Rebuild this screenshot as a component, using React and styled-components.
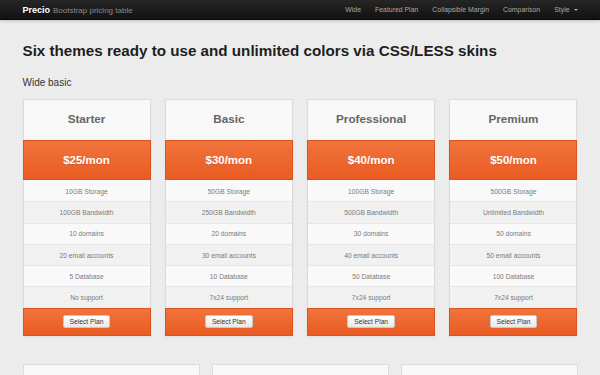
import React from "react";
import styled, { createGlobalStyle } from "styled-components";

const GlobalStyle = createGlobalStyle`
    body {
        margin: 0;
        background-color: #ececec;
        font-family: "Liberation Sans", Arial, sans-serif;
    }
`;

const Navbar = styled.div`
    height: 19px;
    background: linear-gradient(#262626, #121212);
    border-bottom: 1px solid #0a0a0a;
    box-shadow: 0 1px 3px rgba(0, 0, 0, 0.2);
`;

const NavInner = styled.div`
    width: 555px;
    height: 100%;
    margin: 0 auto;
    display: flex;
    align-items: center;
    justify-content: space-between;
`;

const Brand = styled.div`
    display: flex;
    align-items: baseline;
    gap: 3px;
`;

const BrandName = styled.span`
    color: #fff;
    font-weight: bold;
    font-size: 9px;
`;

const BrandTag = styled.span`
    color: #8a8a8a;
    font-size: 8px;
`;

const NavLinks = styled.div`
    display: flex;
    align-items: center;
    margin-right: -7px;
`;

const NavLink = styled.span`
    color: #a8a8a8;
    font-size: 6.9px;
    padding: 0 7px;
    display: flex;
    align-items: center;
    gap: 4px;
`;

const Caret = styled.span`
    width: 0;
    height: 0;
    border-left: 2px solid transparent;
    border-right: 2px solid transparent;
    border-top: 2px solid #a8a8a8;
`;

const Page = styled.div`
    width: 555px;
    margin: 0 auto;
    padding-top: 22px;
`;

const Title = styled.h1`
    margin: 0;
    font-size: 15.2px;
    font-weight: bold;
    color: #1e1e1e;
    line-height: 18px;
`;

const Subtitle = styled.h2`
    margin: 17px 0 0;
    font-size: 10px;
    font-weight: normal;
    color: #333;
    line-height: 12px;
`;

const PlanGrid = styled.div`
    display: grid;
    grid-template-columns: repeat(4, 128px);
    justify-content: space-between;
    margin-top: 10px;
`;

const Card = styled.div`
    background: #f8f8f8;
    border: 1px solid #dcdcdc;
    box-shadow: 0 1px 2px rgba(0, 0, 0, 0.06);
`;

const CardTitle = styled.div`
    height: 40px;
    box-sizing: border-box;
    padding-bottom: 3px;
    display: flex;
    align-items: center;
    justify-content: center;
    font-size: 11.7px;
    font-weight: bold;
    color: #666;
`;

const Orange = styled.div`
    margin: 0 -1px;
    background: linear-gradient(#f1743c, #e95b22);
    border: 1px solid #d9531c;
    display: flex;
    align-items: center;
    justify-content: center;
`;

const Price = styled(Orange)`
    height: 38px;
    color: #fff;
    font-size: 11.5px;
    font-weight: bold;
    text-shadow: 0 1px 0 rgba(0, 0, 0, 0.12);
`;

const Feature = styled.div`
    height: 21.3px;
    box-sizing: border-box;
    display: flex;
    align-items: center;
    justify-content: center;
    font-size: 6.7px;
    color: #7a7a7a;
    background: ${({ odd }) => (odd ? "#f1f1f1" : "#f9f9f9")};
    border-top: 1px solid ${({ first }) => (first ? "transparent" : "#e6e6e6")};
`;

const Footer = styled(Orange)`
    height: 26px;
    margin-bottom: -1px;
`;

const SelectButton = styled.button`
    height: 13px;
    padding: 0 6px;
    font-family: inherit;
    font-size: 6.7px;
    color: #333;
    background: linear-gradient(#ffffff, #e8e8e8);
    border: 1px solid #c8c8c8;
    border-radius: 2px;
    cursor: pointer;
`;

const BottomGrid = styled.div`
    display: grid;
    grid-template-columns: repeat(3, 177px);
    justify-content: space-between;
    margin-top: 28px;
`;

const BottomCard = styled.div`
    height: 40px;
    background: #f8f8f8;
    border: 1px solid #dcdcdc;
`;

const plans = [
    {
        name: "Starter",
        price: "$25/mon",
        features: ["10GB Storage", "100GB Bandwidth", "10 domains", "20 email accounts", "5 Database", "No support"],
    },
    {
        name: "Basic",
        price: "$30/mon",
        features: ["50GB Storage", "250GB Bandwidth", "20 domains", "30 email accounts", "10 Database", "7x24 support"],
    },
    {
        name: "Professional",
        price: "$40/mon",
        features: ["100GB Storage", "500GB Bandwidth", "30 domains", "40 email accounts", "50 Database", "7x24 support"],
    },
    {
        name: "Premium",
        price: "$50/mon",
        features: ["500GB Storage", "Unlimited Bandwidth", "50 domains", "50 email accounts", "100 Database", "7x24 support"],
    },
];

const App = () => {
    return (
        <>
            <GlobalStyle />
            <Navbar>
                <NavInner>
                    <Brand>
                        <BrandName>Precio</BrandName>
                        <BrandTag>Bootstrap pricing table</BrandTag>
                    </Brand>
                    <NavLinks>
                        <NavLink>Wide</NavLink>
                        <NavLink>Featured Plan</NavLink>
                        <NavLink>Collapsible Margin</NavLink>
                        <NavLink>Comparison</NavLink>
                        <NavLink>
                            Style <Caret />
                        </NavLink>
                    </NavLinks>
                </NavInner>
            </Navbar>
            <Page>
                <Title>Six themes ready to use and unlimited colors via CSS/LESS skins</Title>
                <Subtitle>Wide basic</Subtitle>
                <PlanGrid>
                    {plans.map((plan) => (
                        <Card key={plan.name}>
                            <CardTitle>{plan.name}</CardTitle>
                            <Price>{plan.price}</Price>
                            {plan.features.map((f, i) => (
                                <Feature key={f + i} odd={i % 2 === 1} first={i === 0}>
                                    {f}
                                </Feature>
                            ))}
                            <Footer>
                                <SelectButton>Select Plan</SelectButton>
                            </Footer>
                        </Card>
                    ))}
                </PlanGrid>
                <BottomGrid>
                    <BottomCard />
                    <BottomCard />
                    <BottomCard />
                </BottomGrid>
            </Page>
        </>
    );
};

export default App;
